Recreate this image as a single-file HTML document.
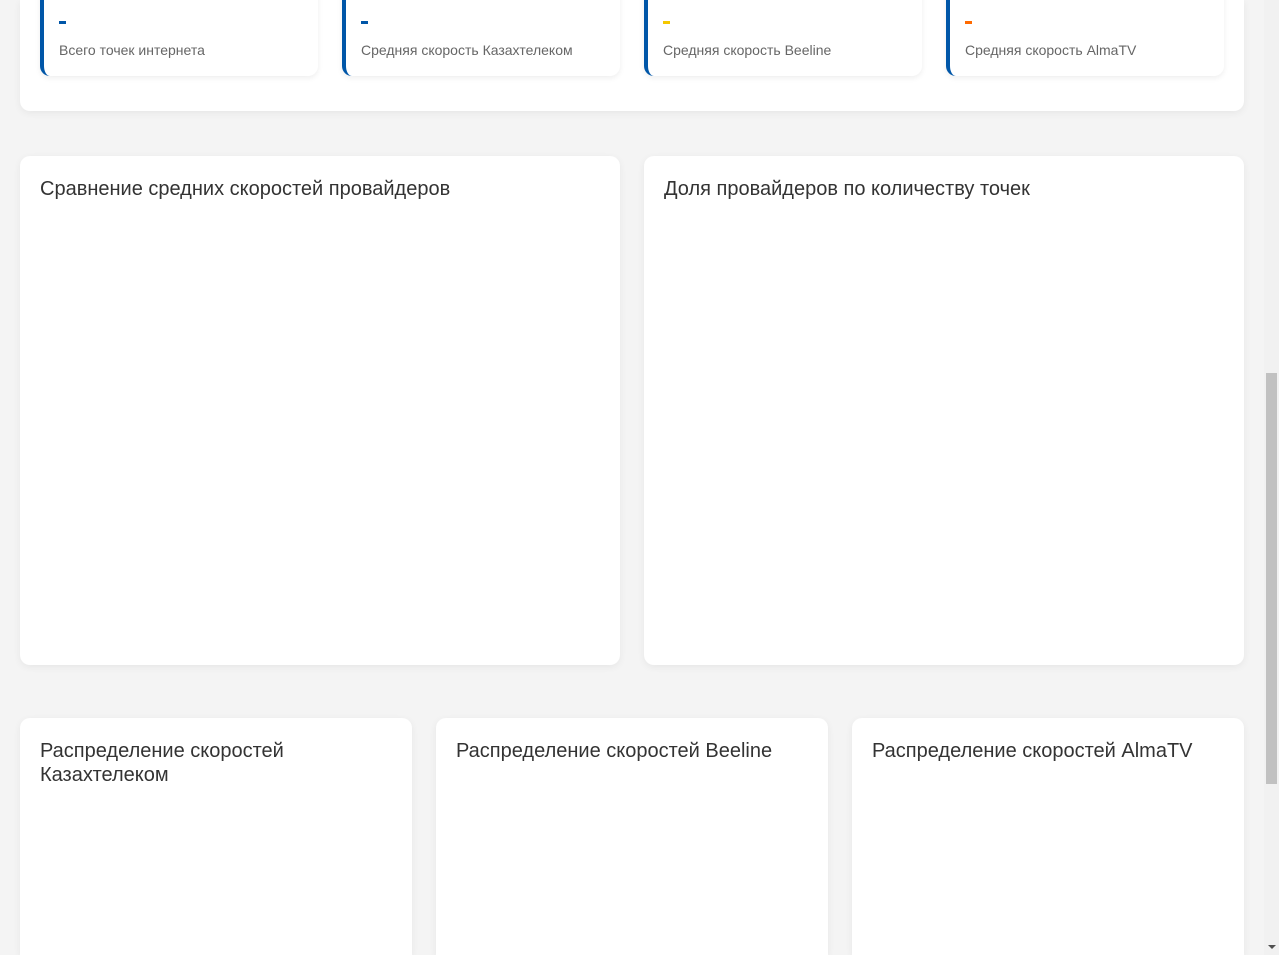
<!DOCTYPE html>
<html><head><meta charset="utf-8"><style>
html,body{margin:0;padding:0;width:1279px;height:955px;overflow:hidden}
body{background:#f4f4f4;font-family:"Liberation Sans",sans-serif;position:relative}
.box{position:absolute;background:#fff;border-radius:10px;box-shadow:0 2px 8px rgba(0,0,0,0.06)}
.stat{position:absolute;top:-20px;height:96px;width:274px;background:#fff;border-left:4px solid #0056a8;border-radius:10px;box-shadow:0 2px 6px rgba(0,0,0,0.07)}
.dash{position:absolute;left:15px;top:41px;width:7px;height:3px;background:#0056a8}
.lbl{position:absolute;left:15px;top:62px;font-size:14px;color:#666}
h3{position:absolute;left:20px;top:21px;margin:0;font-weight:normal;font-size:20px;line-height:24px;color:#333}
.sb{position:absolute;left:1264px;top:0;width:15px;height:955px;background:#f1f1f1}
.th{position:absolute;left:1266px;top:373px;width:11px;height:411px;background:#c1c1c1}
.bot{border-bottom-left-radius:0;border-bottom-right-radius:0}
</style></head><body>
<div class="box" style="left:20px;top:0;width:1224px;height:111px;border-top-left-radius:0;border-top-right-radius:0"></div>
<div class="stat" style="left:40px"><div class="dash"></div><div class="lbl">Всего точек интернета</div></div>
<div class="stat" style="left:342px"><div class="dash"></div><div class="lbl">Средняя скорость Казахтелеком</div></div>
<div class="stat" style="left:644px"><div class="dash" style="background:#f5c800"></div><div class="lbl">Средняя скорость Beeline</div></div>
<div class="stat" style="left:946px"><div class="dash" style="background:#ff6a00"></div><div class="lbl">Средняя скорость AlmaTV</div></div>
<div class="box" style="left:20px;top:156px;width:600px;height:509px"><h3>Сравнение средних скоростей провайдеров</h3></div>
<div class="box" style="left:644px;top:156px;width:600px;height:509px"><h3>Доля провайдеров по количеству точек</h3></div>
<div class="box bot" style="left:20px;top:718px;width:392px;height:237px"><h3>Распределение скоростей<br>Казахтелеком</h3></div>
<div class="box bot" style="left:436px;top:718px;width:392px;height:237px"><h3>Распределение скоростей Beeline</h3></div>
<div class="box bot" style="left:852px;top:718px;width:392px;height:237px"><h3>Распределение скоростей AlmaTV</h3></div>
<div class="sb"></div><div class="th"></div>
<div style="position:absolute;left:1268px;top:945px;width:0;height:0;border-left:4px solid transparent;border-right:4px solid transparent;border-top:4px solid #505050"></div>
</body></html>
